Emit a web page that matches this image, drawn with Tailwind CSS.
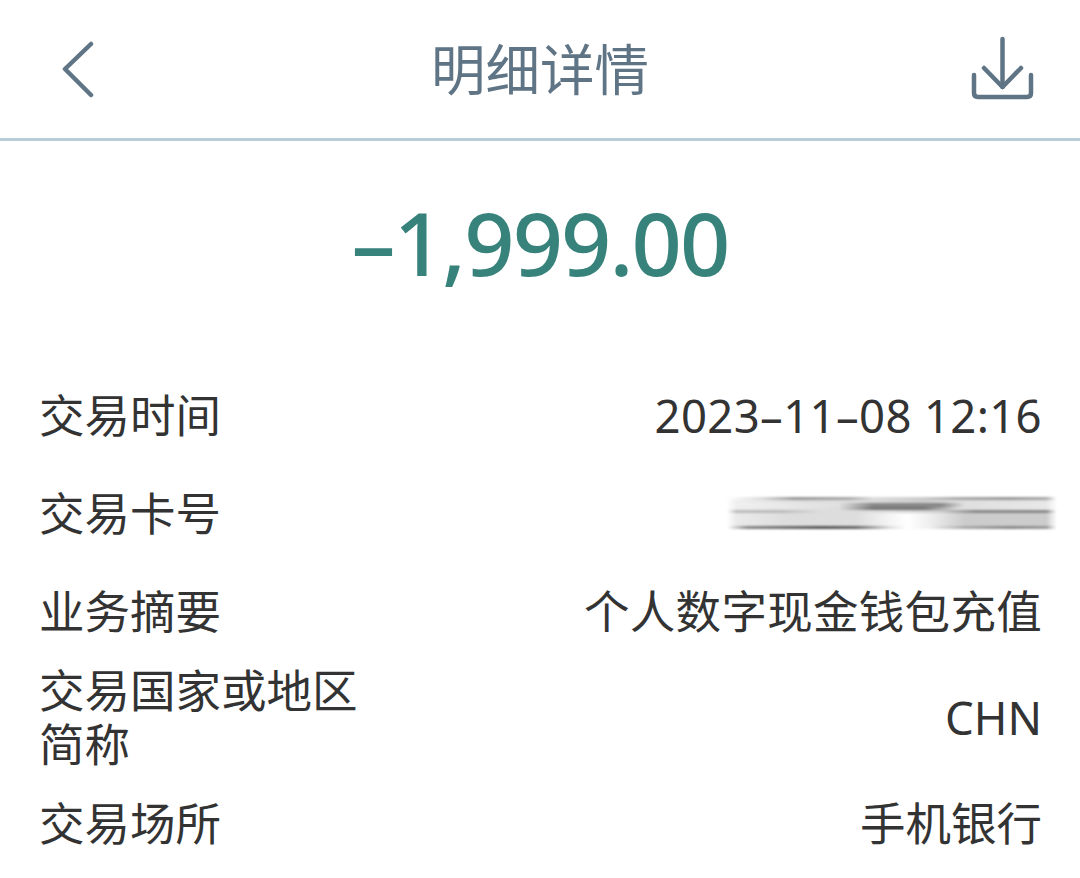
<!DOCTYPE html>
<html lang="zh-CN">
<head>
  <meta charset="UTF-8" />
  <title>明细详情</title>
  <script src="https://cdn.jsdelivr.net/npm/@tailwindcss/browser@4"></script>
</head>
<body class="bg-white font-['Noto_Sans','Noto_Sans_CJK_SC',sans-serif] overflow-hidden">
  <div class="w-[1080px] h-[878px] flex flex-col">
    <header class="h-[141px] shrink-0 border-b-[3px] border-[#b9cdd8] grid grid-cols-[1fr_auto_1fr] items-center px-[44px] text-[#5f7485]">
      <svg class="w-[36px] h-[58px] ml-[16px]" viewBox="0 0 36 58" fill="none" stroke="#5f7485" stroke-width="4.5" stroke-linecap="round" stroke-linejoin="round">
        <path d="M31 4 L5 29 L31 55" />
      </svg>
      <h1 class="text-[54.5px] leading-none">明细详情</h1>
      <svg class="w-[66px] h-[66px] justify-self-end" viewBox="0 0 66 66" fill="none" stroke="#5f7485" stroke-width="4.5" stroke-linecap="round" stroke-linejoin="round">
        <path d="M32.5 3 V51" />
        <path d="M14 32 L32.5 51 L51 32" />
        <path d="M4 39 V57 Q4 61 8 61 H57 Q61 61 61 57 V39" />
      </svg>
    </header>

    <div class="h-[225px] shrink-0 flex items-center justify-center pb-[23px] text-[88px] leading-none font-[480] tracking-[-1.9px] text-[#37827a]">–1,999.00</div>

    <dl class="flex flex-col pl-[39px] pr-[38px] text-[45.5px] leading-[54px] text-[#333333]">
      <div class="h-[98px] flex items-center justify-between"><dt>交易时间</dt><dd class="tracking-[0.35px]">2023–11–08 12:16</dd></div>
      <div class="h-[98px] flex items-center justify-between">
        <dt>交易卡号</dt>
        <dd class="w-[340px] -mr-[18px] flex flex-col blur-[1px]">
          <div class="h-[3px] bg-[linear-gradient(90deg,transparent_2%,#dddddd_12%,#999999_22%,#aaaaaa_38%,#dddddd_45%,#cccccc_60%,#aaaaaa_70%,#999999_85%,#aaaaaa_96%,transparent_99%)]"></div>
          <div class="h-[3px] bg-[linear-gradient(90deg,transparent_2%,#eeeeee_5%,#dddddd_25%,#dddddd_40%,#cccccc_60%,#dddddd_70%,#e5e5e5_96%,transparent_99%)]"></div>
          <div class="h-[4px] bg-[linear-gradient(90deg,transparent_2%,#f0f0f0_5%,#e0e0e0_35%,#888888_45%,#888888_65%,#e0e0e0_72%,#e8e8e8_96%,transparent_99%)]"></div>
          <div class="h-[3px] bg-[linear-gradient(90deg,transparent_2%,#eeeeee_5%,#dddddd_35%,#777777_45%,#777777_60%,#dddddd_70%,#e8e8e8_96%,transparent_99%)]"></div>
          <div class="h-[3px] bg-[linear-gradient(90deg,transparent_2%,#bbbbbb_5%,#bbbbbb_18%,#dddddd_30%,#dddddd_50%,#cccccc_65%,#888888_75%,#888888_96%,transparent_99%)]"></div>
          <div class="h-[13px] bg-[linear-gradient(90deg,transparent_2%,#eaeaea_5%,#dddddd_20%,#dddddd_40%,#f5f5f5_50%,#ffffff_55%,#eeeeee_62%,#cccccc_72%,#cccccc_96%,transparent_99%)]"></div>
          <div class="h-[3px] bg-[linear-gradient(90deg,transparent_2%,#888888_8%,#555555_30%,#666666_40%,#dddddd_50%,#ffffff_55%,#eeeeee_62%,#aaaaaa_72%,#888888_85%,#999999_96%,transparent_99%)]"></div>
        </dd>
      </div>
      <div class="h-[98px] flex items-center justify-between"><dt>业务摘要</dt><dd class="tracking-[0.3px]">个人数字现金钱包充值</dd></div>
      <div class="h-[114px] flex items-center justify-between"><dt class="w-[330px]">交易国家或地区简称</dt><dd>CHN</dd></div>
      <div class="h-[98px] flex items-center justify-between"><dt>交易场所</dt><dd>手机银行</dd></div>
    </dl>
  </div>
</body>
</html>
